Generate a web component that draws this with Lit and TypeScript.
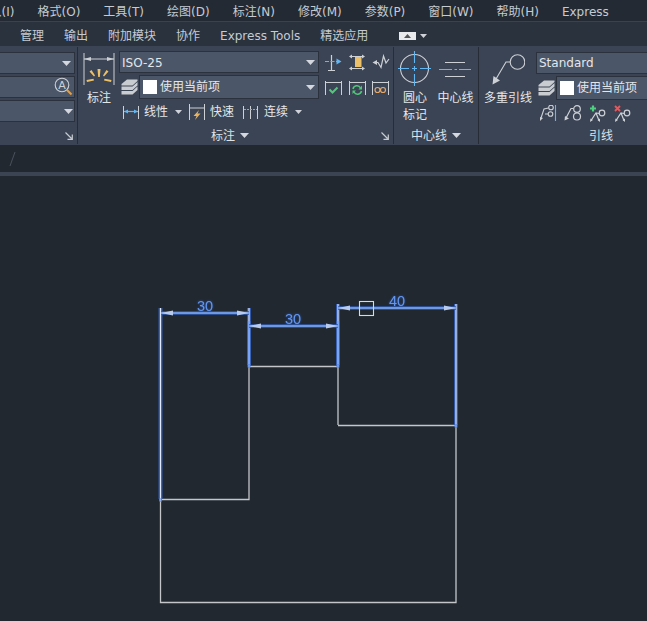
import { LitElement, html, css, svg } from "lit";
import { customElement } from "lit/decorators.js";

const G = "#cdd1d6";
const B = "#62b6f2";

const ico = (w: number, h: number, x: number, y: number, body: unknown) =>
  html`<svg class="ico" width=${w} height=${h} viewBox="${x} ${y} ${w} ${h}">${body}</svg>`;

const arrow = html`<svg class="ar" width="9" height="5" viewBox="0 0 9 5"><path d="M0 0H9L4.500 5Z" fill="#d4d8de"/></svg>`;
const sarrow = html`<svg class="ar" width="7" height="4" viewBox="0 0 7 4"><path d="M0 0H7L3.500 4Z" fill="#cfd3d9"/></svg>`;
const launcher = html`<svg class="launch" width="8" height="8" viewBox="0 0 8 8"><path d="M.5 .5L6.500 6.500M2.500 7.300H7.300V2.500" fill="none" stroke="#c8ccd2" stroke-width="1.200"/></svg>`;

const layers = ico(17, 16, 0, 0, svg`
  <path d="M6 .5H16.500V2L11.500 6.500H.5V5Z" fill="#c9cdd2"/>
  <path d="M.5 7.500H11.500L16.500 3V6.500L11.500 11H.5Z" fill="#c9cdd2"/>
  <path d="M.5 12H11.500L16.500 7.500V11L11.500 15.500H.5Z" fill="#c9cdd2"/>`);

const leaderBranch = (x: number) => svg`
  <circle cx=${x + 12} cy="8" r="2.800" fill="none" stroke=${G} stroke-width="1.200"/>
  <path d="M${x + 9} 8.500L${x + 6} 8L${x + 1} 15.500M${x + 6} 8L${x + 9} 15.500" fill="none" stroke=${G} stroke-width="1.200"/>
  <path d="M${x} 17L${x + .5} 13.500L${x + 3} 15ZM${x + 10} 17L${x + 7.500} 15L${x + 10} 13.500Z" fill=${G}/>`;

@customElement("app-root")
export class AppRoot extends LitElement {
  static styles = css`
    :host { display: block; width: 647px; height: 621px; overflow: hidden; background: #212830; font: 12px/16px "DejaVu Sans", "Noto Sans CJK SC", sans-serif; color: #e4e7ea; }
    .menu { height: 22px; box-sizing: border-box; padding-top: 2px; display: flex; gap: 23px; align-items: center; background: #232a34; color: #c6cbd1; white-space: nowrap; overflow: hidden; border-bottom: 1px solid #3a424f; }
    .menu span:first-child { margin-left: -22.400px; }
    .tabs { height: 24px; box-sizing: border-box; padding: 4px 0 0 20px; display: flex; gap: 20px; align-items: center; background: #2a323e; color: #c6cbd1; white-space: nowrap; }
    .tabs .pill { display: flex; align-items: center; gap: 4px; margin-left: 11px; }
    .pill i { display: flex; align-items: center; justify-content: center; width: 17px; height: 8px; background: #e8eaec; }
    .ribbon { height: 99px; display: flex; background: #3b4454; overflow: hidden; }
    .panel { box-sizing: border-box; display: flex; flex-direction: column; flex: none; position: relative; border-right: 1px solid #262d37; margin: 1px 0; }
    .p1 { width: 78px; } .p2 { width: 316px; } .p3 { width: 85px; } .p4 { flex: 1; border-right: 0; min-width: 0; }
    .body { height: 77px; flex: none; display: flex; }
    .foot { height: 20px; flex: none; box-sizing: border-box; padding-top: 3px; display: flex; align-items: center; gap: 5px; color: #dfe2e6; white-space: nowrap; }
    .launch { margin-left: auto; margin-right: 4px; }
    .p2 .foot { padding-left: 133px; } .p3 .foot { padding-left: 17px; } .p4 .foot { padding-left: 110px; }
    .combo { box-sizing: border-box; height: 22px; display: flex; align-items: center; gap: 3px; padding: 0 3px 0 2px; background: #4b5668; border: 1px solid #2b323d; color: #e4e7ea; white-space: nowrap; }
    .combo .ar { margin-left: auto; }
    .swatch { width: 14px; height: 14px; background: #fff; flex: none; margin-left: 1px; }
    .c1 { display: flex; flex-direction: column; gap: 2px; padding-top: 5px; margin-left: -3px; width: 78px; }
    .c1 .combo { width: 78px; justify-content: flex-end; }
    .c1 .tall { padding-right: 1px; }
    .c1 .low { padding-right: 1px; }
    .big { display: flex; flex-direction: column; align-items: center; text-align: center; flex: none; }
    .bl { width: 32px; margin: 5px 0 0 5px; gap: 5px; }
    .bl span { width: 40px; }
    .mid { width: 200px; margin: 4px 0 0 4px; flex: none; display: flex; flex-direction: column; }
    .iso span { padding-top: 1px; }
    .row2 { display: flex; align-items: center; margin-top: 2px; }
    .row2 .ico { margin: 0 1px 0 2px; }
    .row2 .combo { flex: 1; height: 24px; }
    .tools { display: flex; align-items: center; margin: 5px 0 0 4px; height: 16px; white-space: nowrap; }
    .tools .t { margin-left: 4px; }
    .tools .a1 { margin: 0 7.500px 0 6.500px; }
    .tools .sp { width: 9px; flex: none; }
    .tools .a2 { margin-left: 6.500px; }
    .tools .t2 { margin-left: 5px; }
    .grid { display: grid; grid-template-columns: repeat(3, 24px); grid-auto-rows: 25px; margin: 3px 0 0 2px; justify-items: center; align-items: center; }
    .p3 .body { padding-left: 4px; }
    .cm { width: 34px; padding-top: 3px; line-height: 17px; gap: 4px; }
    .cl { width: 45px; margin-left: 1px; padding-top: 3px; line-height: 17px; gap: 4px; }
    .p4 .body { padding-left: 5px; }
    .ml { width: 48px; padding-top: 3px; gap: 4px; line-height: 17px; }
    .right { margin: 5px 0 0 4px; width: 140px; flex: none; display: flex; flex-direction: column; }
    .right .combo { width: 130px; }
    .right .row2 .combo { flex: none; width: 110px; }
    .lead { display: flex; gap: 7px; margin: 5px 0 0 3px; }
    .strip { height: 27px; background: #212830; display: flex; align-items: center; padding-left: 8px; }
    .band { height: 4px; background: #3b4452; }
    .cv { display: block; }
    .num { font: 14.500px "Liberation Sans", sans-serif; fill: #6496ee; filter: drop-shadow(0 0 1px #2f5db8); }
    .ico, .ar { display: block; flex: none; }
  `;

  private dim(x1: number, x2: number, y: number) {
    return svg`
      <path d="M${x1} ${y}H${x2}" stroke="#2f58ad" stroke-width="3.600"/>
      <path d="M${x1} ${y}H${x2}" stroke="#86aef4" stroke-width="1.400"/>
      <path d="M${x1} ${y}L${x1 + 12} ${y - 2.500}V${y + 2.500}ZM${x2} ${y}L${x2 - 12} ${y - 2.500}V${y + 2.500}Z" fill="#b8cbee"/>`;
  }
  private ext(x: number, a: number, b: number, c: number) {
    return svg`
      <path d="M${x} ${a}V${c}" stroke="#3358a8" stroke-width="4"/>
      <path d="M${x} ${b}V${c}" stroke="#5f92f0" stroke-width="2.400"/>
      <path d="M${x} ${b}V${c}" stroke="#9cbcf5" stroke-width=".9"/>
      <path d="M${x} ${a}V${b}" stroke="#dfe8fa" stroke-width="1.200"/>
      <rect x=${x - 1.5} y=${c - .5} width="3" height="3" fill="#4a7fe6"/>
      <rect x=${x - .5} y=${c + .5} width="1" height="1" fill="#dfe8fa"/>`;
  }

  render() {
    return html`
      <div class="menu">
        ${["插入(I)", "格式(O)", "工具(T)", "绘图(D)", "标注(N)", "修改(M)", "参数(P)", "窗口(W)", "帮助(H)", "Express"].map((m) => html`<span>${m}</span>`)}
      </div>
      <div class="tabs">
        ${["管理", "输出", "附加模块", "协作", "Express Tools", "精选应用"].map((m) => html`<span>${m}</span>`)}
        <span class="pill"><i><svg width="7" height="4" viewBox="0 0 7 4"><path d="M0 4L3.500 0L7 4Z" fill="#555"/></svg></i>${sarrow}</span>
      </div>
      <div class="ribbon">
        <section class="panel p1">
          <div class="body"><div class="c1">
            <div class="combo">${arrow}</div>
            <div class="combo tall">
              ${ico(19, 20, 0, 0, svg`
                <circle cx="8" cy="8" r="6.800" fill="none" stroke=${G} stroke-width="1.100"/>
                <text x="8" y="12" text-anchor="middle" font-size="11" fill=${G} font-family="DejaVu Sans">A</text>
                <path d="M13 13L17.500 17.500" stroke="#e0a050" stroke-width="2"/>`)}
            </div>
            <div class="combo low">${arrow}</div>
          </div></div>
          <div class="foot">${launcher}</div>
        </section>
        <section class="panel p2">
          <div class="body">
            <div class="big bl">
              ${ico(32, 33, 83, 52, svg`
                <path d="M84 53V85M114 53V85M84 59H114" fill="none" stroke=${G} stroke-width="1"/>
                <path d="M84 59L91 57V61ZM114 59L107 57V61Z" fill=${G}/>
                <path d="M97.500 69L100.500 69L99.800 77H98.200Z M89.500 71.500L91.500 70L95 75.500L94 76.500Z M108.500 71.500L106.500 70L103 75.500L104 76.500Z M86.500 80L93.500 78.800L94 80.500L87 82Z M111.500 80L104.500 78.800L104 80.500L111 82Z" fill="#ecc068"/>`)}
              <span>标注</span>
            </div>
            <div class="mid">
              <div class="combo iso"><span>ISO-25</span>${arrow}</div>
              <div class="row2">${layers}<div class="combo"><span class="swatch"></span><span>使用当前项</span>${arrow}</div></div>
              <div class="tools">
                ${ico(17, 15, 123, 104, svg`
                  <path d="M123.500 105V118M138.500 105V118" stroke=${G}/><path d="M124 110.500H138" stroke=${B} stroke-width="1.200"/>
                  <path d="M124 110.500L128 108.500V112.500ZM138 110.500L134 108.500V112.500Z" fill=${B}/>`)}
                <span class="t">线性</span><span class="a1">${sarrow}</span>
                ${ico(17, 17, 189, 103, svg`
                  <path d="M189.500 103V119M204.500 103V119M190 107H204" stroke=${G} fill="none"/>
                  <path d="M199 109L193.500 115H196.500L195 119L200.500 112.500H197.500Z" fill="#eab25a"/>`)}
                <span class="t">快速</span>
                <span class="sp"></span>
                ${ico(16, 15, 243, 104, svg`
                  <path d="M243.500 105V118M250.500 105V118M257.500 105V118" stroke=${G}/><path d="M244 108.500H257" stroke=${B} stroke-width="1.200" stroke-dasharray="2 1"/>`)}
                <span class="t2">连续</span><span class="a2">${sarrow}</span>
              </div>
            </div>
            <div class="grid">
              ${ico(18, 18, 322, 53, svg`
                <path d="M329.500 54V69M326 69.500H333" stroke=${G} fill="none" stroke-width="1.200"/>
                <path d="M323 60.500H338" stroke=${B} stroke-width="1.200" stroke-dasharray="4 1.500"/><path d="M339.500 60.500L334.500 57.500V63.500Z" fill=${B}/>`)}
              ${ico(18, 18, 346, 53, svg`
                <rect x="353" y="56" width="6.500" height="10" fill="#ecc068"/>
                <path d="M348 55.500H362M348 67.500H362" stroke=${G} stroke-width="1.200"/><path d="M347 55.500L350 53.500V57.500ZM363 55.500L360 53.500V57.500ZM347 67.500L350 65.500V69.500ZM363 67.500L360 65.500V69.500Z" fill=${G}/>`)}
              ${ico(18, 18, 371, 53, svg`
                <path d="M373 61.500H377L380 66.500L382.500 55L385 62L388 58" fill="none" stroke=${G} stroke-width="1.200"/><path d="M371.500 61.500L376 59V64Z" fill=${G}/>`)}
              ${ico(18, 16, 322, 79, svg`
                <path d="M323.500 80V94M339.500 80V94M324 81.500H339" stroke=${G} fill="none"/>
                <path d="M327.500 88.500L330.500 91.500L335.500 86.500" fill="none" stroke="#4fc878" stroke-width="2"/>`)}
              ${ico(18, 16, 346, 79, svg`
                <path d="M347.500 80V94M363.500 80V94M348 81.500H363" stroke=${G} fill="none"/>
                <path d="M351 88A4 4 0 0 1 358.500 87M359.500 90A4 4 0 0 1 352 91" fill="none" stroke="#4fc878" stroke-width="1.500"/>
                <path d="M360 84.500V88.500H356.500ZM350.500 93V89.500H354Z" fill="#4fc878"/>`)}
              ${ico(18, 16, 371, 79, svg`
                <path d="M371.500 80V94M387.500 80V94M372 81.500H387" stroke=${G} fill="none"/>
                <circle cx="376.500" cy="89" r="2.500" fill="none" stroke="#e8a868" stroke-width="1.200"/><circle cx="382" cy="89" r="2.500" fill="none" stroke="#e8a868" stroke-width="1.200"/>`)}
            </div>
          </div>
          <div class="foot"><span>标注</span>${arrow}${launcher}</div>
        </section>
        <section class="panel p3">
          <div class="body">
            <div class="big cm">
              ${ico(34, 36, 398, 50, svg`
                <circle cx="414.500" cy="68.500" r="14" fill="none" stroke=${G} stroke-width="1.100"/>
                <path d="M414.500 51V63M414.500 66V71M414.500 74V86M398 68.500H409M412 68.500H417M420 68.500H431" stroke=${B} stroke-width="1.100"/>`)}
              <span>圆心<br />标记</span>
            </div>
            <div class="big cl">
              ${ico(36, 36, 438, 50, svg`
                <path d="M445 62.500H465M445 76.500H465" stroke=${G} stroke-width="1.100"/>
                <path d="M439 69.500H452M454.500 69.500H457M459 69.500H471" stroke=${B} stroke-width="1.100"/>`)}
              <span>中心线</span>
            </div>
          </div>
          <div class="foot"><span>中心线</span>${arrow}</div>
        </section>
        <section class="panel p4">
          <div class="body">
            <div class="big ml">
              ${ico(34, 36, 490, 50, svg`
                <circle cx="516.500" cy="62" r="7.300" fill="none" stroke=${G} stroke-width="1.100"/>
                <path d="M509 62H505L495 79" fill="none" stroke=${G} stroke-width="1.100"/>
                <path d="M491.500 84.500L492.500 76L499 80.500Z" fill=${G}/>`)}
              <span>多重引线</span>
            </div>
            <div class="right">
              <div class="combo"><span>Standard</span></div>
              <div class="row2">${layers}<div class="combo"><span class="swatch"></span><span>使用当前项</span></div></div>
              <div class="lead">
                ${ico(18, 18, 0, 0, svg`
                  <path d="M16.500 0V16" stroke=${B} stroke-width="1.100"/>
                  <circle cx="12" cy="2.500" r="2.300" fill="none" stroke=${G} stroke-width="1.100"/><circle cx="11.500" cy="9" r="2.300" fill="none" stroke=${G} stroke-width="1.100"/>
                  <path d="M9.500 3L5 4L2 13M9 9H6" fill="none" stroke=${G} stroke-width="1.100"/><path d="M1 16L1 12L4 13Z" fill=${G}/>`)}
                ${ico(18, 18, 0, 0, svg`
                  <circle cx="13" cy="4" r="3.300" fill="none" stroke=${G} stroke-width="1.200"/><circle cx="13" cy="11.500" r="3.500" fill="none" stroke=${G} stroke-width="1.200"/>
                  <path d="M9.500 3.500H7L2 13" fill="none" stroke=${G} stroke-width="1.200"/><path d="M.5 15.500L1 11L5 13.500Z" fill=${G}/>`)}
                ${ico(18, 18, 0, 0, svg`<path d="M1 3.500H7M4 .5V6.500" stroke="#4fd080" stroke-width="2.200"/>${leaderBranch(1)}`)}
                ${ico(18, 18, 0, 0, svg`<path d="M1 1L6 6M6 1L1 6" stroke="#e05a60" stroke-width="1.800"/>${leaderBranch(1)}`)}
              </div>
            </div>
          </div>
          <div class="foot"><span>引线</span></div>
        </section>
      </div>
      <div class="strip"><svg width="8" height="16" viewBox="0 0 8 16"><path d="M7 1L2 15" stroke="#4a515c"/></svg></div>
      <div class="band"></div>
      <svg class="cv" width="647" height="445" viewBox="0 176 647 445" fill="none">
        <path d="M160.500 499V602.500H456V425.500H338M160 499.500H249V366.500H338V425M456 425V600M249 366V499" stroke="#c4c7ca" stroke-width="1.300"/>
        ${this.ext(160.5, 308, 499, 499)}
        ${this.ext(249, 308, 321, 365)}
        ${this.ext(338, 304, 321, 365)}
        ${this.ext(456, 304, 425, 425)}
        ${this.dim(161, 249, 313)}
        ${this.dim(249, 338, 326)}
        ${this.dim(338, 456, 308)}
        <text class="num" x="197" y="311">30</text>
        <text class="num" x="285" y="324">30</text>
        <text class="num" x="389" y="306">40</text>
        <rect x="359.500" y="301.500" width="14" height="14" stroke="#d8dadc" stroke-width="1.100" fill="none"/>
      </svg>
    `;
  }
}
